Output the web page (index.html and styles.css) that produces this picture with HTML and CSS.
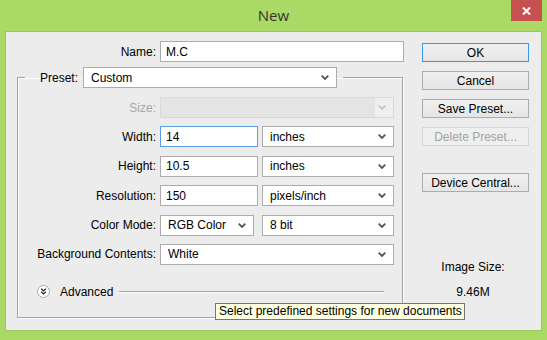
FILE: index.html
```html
<!DOCTYPE html>
<html lang="en">
<head>
    <meta charset="UTF-8">
    <title>New</title>
    <link rel="stylesheet" href="styles.css">
</head>
<body>
    <div class="window">
        <div class="titlebar">
            <span></span>
            <span class="title">New</span>
            <button class="close-btn">
                <svg width="9" height="8" viewBox="0 0 9 8"><path d="M1 0.5 L8 7.5 M8 0.5 L1 7.5" stroke="#fff" stroke-width="2"/></svg>
            </button>
        </div>

        <div class="client">
            <div class="main">
                <div class="name-row">
                    <label class="lbl">Name:</label>
                    <div class="field name-field">M.C</div>
                </div>

                <fieldset class="preset-box">
                    <legend>
                        <div class="legend-row">
                            <label class="lbl">Preset:</label>
                            <div class="select preset-select"><span>Custom</span><svg class="chev" width="8" height="5" viewBox="0 0 8 5"><path d="M0.7 0.7 L4 4 L7.3 0.7" fill="none" stroke="#555" stroke-width="1.8"/></svg></div>
                        </div>
                    </legend>

                    <div class="form-grid">
                        <label class="lbl disabled">Size:</label>
                        <div class="select disabled"><span></span><svg class="chev" width="8" height="5" viewBox="0 0 8 5"><path d="M0.7 0.7 L4 4 L7.3 0.7" fill="none" stroke="#c4c4c4" stroke-width="1.8"/></svg></div>

                        <label class="lbl">Width:</label>
                        <div class="pair">
                            <div class="field focused">14</div>
                            <div class="select"><span>inches</span><svg class="chev" width="8" height="5" viewBox="0 0 8 5"><path d="M0.7 0.7 L4 4 L7.3 0.7" fill="none" stroke="#555" stroke-width="1.8"/></svg></div>
                        </div>

                        <label class="lbl">Height:</label>
                        <div class="pair">
                            <div class="field">10.5</div>
                            <div class="select"><span>inches</span><svg class="chev" width="8" height="5" viewBox="0 0 8 5"><path d="M0.7 0.7 L4 4 L7.3 0.7" fill="none" stroke="#555" stroke-width="1.8"/></svg></div>
                        </div>

                        <label class="lbl">Resolution:</label>
                        <div class="pair">
                            <div class="field">150</div>
                            <div class="select"><span>pixels/inch</span><svg class="chev" width="8" height="5" viewBox="0 0 8 5"><path d="M0.7 0.7 L4 4 L7.3 0.7" fill="none" stroke="#555" stroke-width="1.8"/></svg></div>
                        </div>

                        <label class="lbl">Color Mode:</label>
                        <div class="pair mode-pair">
                            <div class="select mode-select"><span>RGB Color</span><svg class="chev" width="8" height="5" viewBox="0 0 8 5"><path d="M0.7 0.7 L4 4 L7.3 0.7" fill="none" stroke="#555" stroke-width="1.8"/></svg></div>
                            <div class="select"><span>8 bit</span><svg class="chev" width="8" height="5" viewBox="0 0 8 5"><path d="M0.7 0.7 L4 4 L7.3 0.7" fill="none" stroke="#555" stroke-width="1.8"/></svg></div>
                        </div>

                        <label class="lbl">Background Contents:</label>
                        <div class="select"><span>White</span><svg class="chev" width="8" height="5" viewBox="0 0 8 5"><path d="M0.7 0.7 L4 4 L7.3 0.7" fill="none" stroke="#555" stroke-width="1.8"/></svg></div>
                    </div>

                    <div class="advanced">
                        <svg class="adv-icon" width="13" height="13" viewBox="0 0 13 13">
                            <circle cx="6.5" cy="6.5" r="6" fill="#fff" stroke="#a9a9a9"/>
                            <path d="M4.2 3.8 L6.5 6 L8.8 3.8 M4.2 6.8 L6.5 9 L8.8 6.8" fill="none" stroke="#222" stroke-width="1.2"/>
                        </svg>
                        <span>Advanced</span>
                        <div class="adv-line"></div>
                    </div>
                </fieldset>
            </div>

            <div class="side">
                <button class="btn default">OK</button>
                <button class="btn">Cancel</button>
                <button class="btn">Save Preset...</button>
                <button class="btn" disabled>Delete Preset...</button>
                <button class="btn device">Device Central...</button>

                <div class="image-size">
                    <div>Image Size:</div>
                    <div class="size-value">9.46M</div>
                </div>
            </div>
        </div>

        <div class="tooltip">Select predefined settings for new documents</div>
    </div>
</body>
</html>
```

FILE: styles.css
```css
body {
    margin: 0;
    background: #abd965;
    font-family: "Liberation Sans", Arial, sans-serif;
    font-size: 12px;
    color: #000;
}
.window {
    position: relative;
    width: 547px;
    height: 340px;
    background: #abd965;
    overflow: hidden;
}
.titlebar {
    height: 31px;
    display: grid;
    grid-template-columns: 1fr auto 1fr;
    align-items: start;
}
.titlebar .title {
    font-family: "Open Sans", "Noto Sans", sans-serif;
    font-size: 15px;
    color: #333;
    line-height: 31px;
}
.close-btn {
    justify-self: end;
    margin-right: 5px;
    width: 31px;
    height: 21px;
    border: 0;
    padding: 0;
    background: #c75050;
    display: flex;
    align-items: center;
    justify-content: center;
}
.client {
    margin: 0 5px;
    height: 298px;
    background: #ececec;
    border: 1px solid #9cc75c;
    display: flex;
}
.main {
    width: 398px;
    padding-top: 9px;
}
.lbl {
    text-align: right;
    white-space: nowrap;
}
.lbl.disabled {
    color: #a6a6a6;
}
.name-row {
    display: grid;
    grid-template-columns: 150px 244px;
    column-gap: 4px;
    align-items: center;
}
.field,
.select {
    height: 21px;
    box-sizing: border-box;
    background: #fff;
    border: 1px solid #acacac;
    display: flex;
    align-items: center;
    padding-left: 5px;
    white-space: nowrap;
}
.field.focused {
    border-color: #5a9fe6;
}
.select {
    justify-content: space-between;
    padding: 0 7px 0 7px;
}
.select.disabled {
    background: linear-gradient(to right, #e4e4e4 calc(100% - 18px), #efefef 0);
    border-color: #d9d9d9;
}
.chev {
    flex: none;
}
.preset-box {
    margin: 5px 0 0 11px;
    width: 386px;
    box-sizing: border-box;
    padding: 9px 0 18px 0;
    border: 1px solid #a3a3a3;
    box-shadow: inset 1px 1px 0 #fff, 1px 1px 0 #fff;
}
.preset-box legend {
    margin-left: 7px;
    padding: 0 6px 0 15px;
}
.legend-row {
    display: flex;
    align-items: center;
    gap: 5px;
}
.preset-select {
    width: 254px;
}
.form-grid {
    display: grid;
    grid-template-columns: 138px 234px;
    column-gap: 4px;
    row-gap: 8.4px;
    align-items: center;
}
.pair {
    display: grid;
    grid-template-columns: 98px 132px;
    column-gap: 4px;
}
.mode-pair {
    grid-template-columns: 94px 132px;
    column-gap: 8px;
}
.advanced {
    display: flex;
    align-items: center;
    margin-top: 20px;
    padding-left: 19px;
    height: 14px;
}
.adv-icon {
    margin-right: 10px;
}
.adv-line {
    flex: 1;
    height: 1px;
    background: #a3a3a3;
    box-shadow: 0 1px 0 #fff;
    margin: 0 18px 0 6px;
}
.side {
    width: 107px;
    margin-left: 18px;
    padding-top: 11px;
    display: flex;
    flex-direction: column;
    gap: 9px;
}
.btn {
    height: 19px;
    padding: 0;
    font-family: "Liberation Sans", Arial, sans-serif;
    font-size: 12px;
    color: #000;
    background: linear-gradient(#f0f0f0, #e5e5e5);
    border: 1px solid #acacac;
}
.btn.default {
    border-color: #3c97e8;
}
.btn:disabled {
    color: #a3a3a3;
    background: #efefef;
    border-color: #d6d6d6;
}
.btn.device {
    margin-top: 18px;
}
.image-size {
    margin-top: 59px;
    text-align: center;
    padding-right: 5px;
    line-height: 14px;
}
.size-value {
    margin-top: 11px;
}
.tooltip {
    position: absolute;
    left: 215px;
    top: 303px;
    width: 250px;
    height: 17px;
    box-sizing: border-box;
    background: #ffffe1;
    border: 1px solid #767676;
    padding-left: 3px;
    line-height: 15px;
    white-space: nowrap;
}
```
